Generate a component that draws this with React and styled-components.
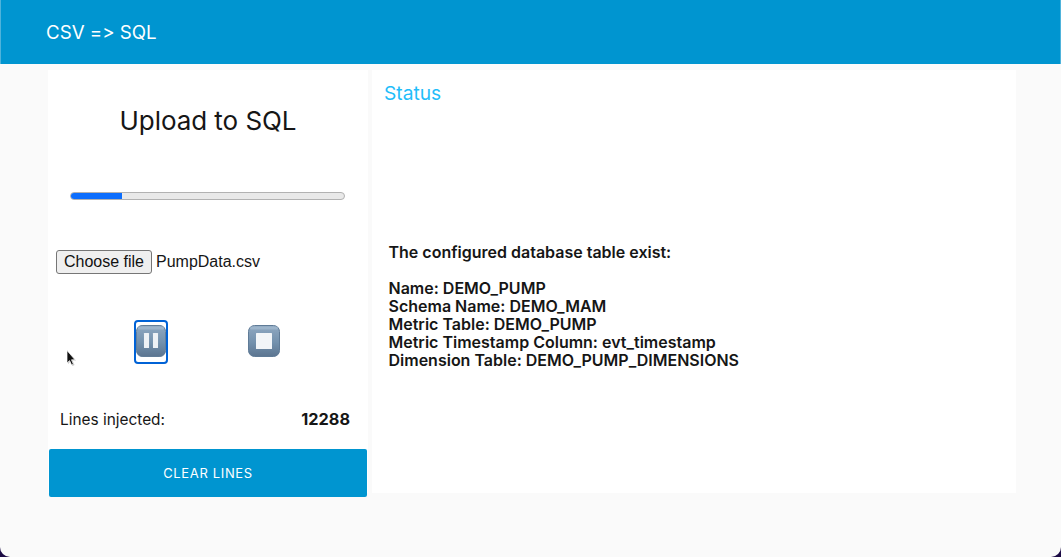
import React from 'react'
import styled, { createGlobalStyle } from 'styled-components'

const GlobalStyle = createGlobalStyle`
  html, body {
    margin: 0;
    padding: 0;
    background: #1c0b45;
  }
  body {
    font-family: Inter, "Liberation Sans", sans-serif;
    font-feature-settings: "calt" 0, "liga" 0;
    color: #161616;
  }
`

const Page = styled.div`
  position: relative;
  height: 557px;
  overflow: hidden;
  background: #fafafa;
  border-radius: 0 0 10px 10px;
`

const Header = styled.header`
  display: flex;
  align-items: center;
  height: 64px;
  padding-left: 46px;
  background: #0095d0;
  box-shadow: inset 1px 0 #4fb3db, inset -1px 0 #4fb3db;
  color: #fff;
  font-size: 18.7px;
`

const Content = styled.main`
  display: flex;
  align-items: flex-start;
  gap: 4px;
  padding: 6px 0 0 48px;
`

const LeftCard = styled.section`
  display: flex;
  flex-direction: column;
  width: 320px;
  height: 423px;
  background: #fff;

  & > * {
    flex-shrink: 0;
  }
`

const RightCard = styled.section`
  width: 644px;
  height: 423px;
  background: #fff;
`

const Title = styled.h1`
  margin: 33px 0 0;
  height: 36px;
  font-size: 26px;
  font-weight: 400;
  letter-spacing: -0.05px;
  line-height: 36px;
  text-align: center;
`

const Progress = styled.div`
  box-sizing: border-box;
  width: 275px;
  height: 8px;
  margin: 53px 0 0 22px;
  overflow: hidden;
  background: #e9e9e9;
  border: 1px solid #b2b2b2;
  border-radius: 4px;
`

const ProgressFill = styled.div`
  height: 100%;
  margin: -1px 0 0 -1px;
  padding-bottom: 2px;
  background: #0d6efd;
`

const FileRow = styled.div`
  display: flex;
  align-items: center;
  gap: 4px;
  margin: 50px 0 0 8px;
  font-family: "Liberation Sans", Arial, sans-serif;
  font-size: 16px;
`

const ChooseButton = styled.button`
  box-sizing: border-box;
  width: 96px;
  height: 24px;
  padding: 0;
  background: #efefef;
  border: 1px solid #767676;
  border-radius: 3px;
  color: #111;
  font: inherit;
`

const Controls = styled.div`
  display: flex;
  align-items: flex-start;
  height: 44px;
  margin: 46px 0 0 86px;
`

const IconButton = styled.button`
  box-sizing: border-box;
  display: flex;
  flex-shrink: 0;
  justify-content: center;
  width: ${({ $focused }) => ($focused ? '34px' : '32px')};
  height: 44px;
  padding: ${({ $focused }) => ($focused ? '3px 0 0' : '5px 0 0')};
  margin-right: 80px;
  background: none;
  border: ${({ $focused }) => ($focused ? '2px solid #0062d6' : '0')};
  border-radius: 4px;
`

const Counter = styled.div`
  display: flex;
  justify-content: space-between;
  margin: 46px 18px 0 12px;
  font-size: 15.4px;
  line-height: 19px;
`

const Count = styled.strong`
  font-size: 16.3px;
  font-weight: 700;
`

const ClearButton = styled.button`
  width: 318px;
  height: 48px;
  margin: 20px 0 0 1px;
  background: #0095d0;
  border: 0;
  border-radius: 2px;
  color: #fff;
  font: 400 13px Inter, sans-serif;
  letter-spacing: 0.65px;
`

const StatusTitle = styled.h2`
  margin: 12px 0 0 12px;
  color: #1fbdfa;
  font-size: 19.2px;
  font-weight: 400;
  line-height: 22px;
`

const Info = styled.div`
  margin: 139px 0 0 16.5px;
  font-size: 16px;
  font-weight: 600;
  line-height: 18px;
`

const InfoGap = styled.div`
  height: 18px;
`

const Cursor = styled.svg`
  position: absolute;
  left: 65px;
  top: 349px;
`

const EmojiIcon = ({ id, width, children }) => (
  <svg width={width} height="32" viewBox="0 0 32 32" preserveAspectRatio="none">
    <defs>
      <linearGradient id={id} x1="0" y1="0" x2="0" y2="1">
        <stop offset="0" stopColor="#8fa8c1" />
        <stop offset="0.55" stopColor="#7391ad" />
        <stop offset="1" stopColor="#5c7590" />
      </linearGradient>
    </defs>
    <rect x="0.5" y="0.5" width="31" height="31" rx="6" fill={`url(#${id})`} stroke="#5f7b97" />
    <rect x="2" y="1.5" width="28" height="3" rx="1.5" fill="#a9bfd3" opacity="0.6" />
    {children}
  </svg>
)

const App = () => (
  <Page>
    <GlobalStyle />
    <Header>CSV =&gt; SQL</Header>
    <Content>
      <LeftCard>
        <Title>Upload to SQL</Title>
        <Progress>
          <ProgressFill style={{ width: `${(52 / 275) * 100}%` }} />
        </Progress>
        <FileRow>
          <ChooseButton type="button">Choose file</ChooseButton>
          <span>PumpData.csv</span>
        </FileRow>
        <Controls>
          <IconButton type="button" $focused aria-label="Pause">
            <EmojiIcon id="pause-bg" width="30">
              <rect x="8.5" y="8" width="5.4" height="15" rx="0.5" fill="#eef2f6" />
              <rect x="18.1" y="8" width="5.4" height="15" rx="0.5" fill="#eef2f6" />
            </EmojiIcon>
          </IconButton>
          <IconButton type="button" aria-label="Stop">
            <EmojiIcon id="stop-bg" width="32">
              <rect x="8" y="8" width="16" height="16" rx="0.5" fill="#f2f5f8" />
            </EmojiIcon>
          </IconButton>
        </Controls>
        <Counter>
          <span>Lines injected:</span>
          <Count>12288</Count>
        </Counter>
        <ClearButton type="button">CLEAR LINES</ClearButton>
      </LeftCard>
      <RightCard>
        <StatusTitle>Status</StatusTitle>
        <Info>
          <div>The configured database table exist:</div>
          <InfoGap />
          <div>Name: DEMO_PUMP</div>
          <div>Schema Name: DEMO_MAM</div>
          <div>Metric Table: DEMO_PUMP</div>
          <div>Metric Timestamp Column: evt_timestamp</div>
          <div>Dimension Table: DEMO_PUMP_DIMENSIONS</div>
        </Info>
      </RightCard>
    </Content>
    <Cursor width="13" height="20" viewBox="0 0 13 20">
      <path d="M3 3 L3 15 L5.5 12.5 L7.5 17 L9.5 16 L7.5 11.5 L11 11.5 Z" fill="#8a8a8a" opacity="0.5" />
      <path d="M2 1.5 L2 14 L4.6 11.6 L6.6 16 L8.4 15.2 L6.5 10.8 L10 10.8 Z" fill="#111" stroke="#fff" strokeWidth="0.7" />
    </Cursor>
  </Page>
)

export default App
